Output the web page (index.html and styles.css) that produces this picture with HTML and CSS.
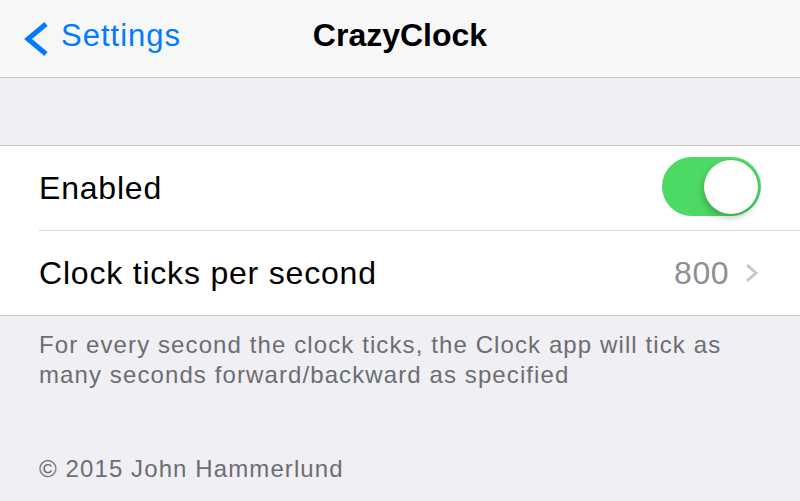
FILE: index.html
```html
<!DOCTYPE html>
<html>
<head>
<meta charset="utf-8">
<link rel="stylesheet" href="styles.css">
</head>
<body>
<header class="navbar">
  <a class="back">
    <svg class="back-chevron" width="30" height="40" viewBox="0 0 30 40"><path d="M26 5 L8 20 L26 35" fill="none" stroke="#007aff" stroke-width="5" stroke-linecap="butt" stroke-linejoin="miter"/></svg>
    <span>Settings</span>
  </a>
  <h1 class="title">CrazyClock</h1>
  <span class="spacer"></span>
</header>
<main class="content">
  <section class="group">
    <div class="row">
      <span class="label">Enabled</span>
      <span class="switch"><span class="knob"></span></span>
    </div>
    <div class="row">
      <span class="label">Clock ticks per second</span>
      <span class="detail">800<svg class="disclosure" width="16" height="20" viewBox="0 0 16 20"><path d="M3 2 L12 10 L3 18" fill="none" stroke="#c7c7cc" stroke-width="3"/></svg></span>
    </div>
  </section>
  <p class="footer">For every second the clock ticks, the Clock app will tick as many seconds forward/backward as specified</p>
  <p class="copyright">© 2015 John Hammerlund</p>
</main>
</body>
</html>
```
FILE: styles.css
```css
* { box-sizing: border-box; }
html, body { margin: 0; padding: 0; }
body {
  width: 800px;
  height: 501px;
  overflow: hidden;
  background: #efeff4;
  font-family: "Liberation Sans", Arial, sans-serif;
}
.navbar {
  height: 78px;
  background: #f7f7f8;
  border-bottom: 1px solid #c8c7cc;
  display: grid;
  grid-template-columns: 1fr auto 1fr;
  align-items: center;
  padding-bottom: 6px;
}
.back {
  display: flex;
  align-items: center;
  gap: 11px;
  padding-left: 20px;
  color: #007aff;
  font-size: 31px;
  letter-spacing: 1px;
}
.back-chevron { margin-top: 6px; flex: none; }
.title {
  margin: 0;
  font-size: 32px;
  font-weight: bold;
  color: #000;
}
.content { padding-top: 67px; }
.group {
  background: #fff;
  border-top: 1px solid #c8c7cc;
  border-bottom: 1px solid #c8c7cc;
  padding-left: 39px;
}
.row {
  height: 84px;
  display: flex;
  align-items: center;
  justify-content: space-between;
  padding-right: 38px;
  font-size: 32px;
  letter-spacing: 0.8px;
  color: #000;
}
.row + .row { border-top: 1px solid #d9d9dc; height: 85px; }
.switch {
  width: 99px;
  height: 59px;
  border-radius: 30px;
  background: #4cd964;
  position: relative;
  display: block;
  margin-top: -3px;
  margin-right: 1px;
}
.knob {
  position: absolute;
  right: 3px;
  top: 3px;
  width: 54px;
  height: 54px;
  border-radius: 50%;
  background: #fff;
  box-shadow: -1px 4px 7px rgba(0,0,0,0.22), 0 0 1px rgba(0,0,0,0.15);
}
.detail {
  color: #8e8e93;
  display: flex;
  align-items: center;
  gap: 15px;
  margin-right: 2px;
  letter-spacing: 0.5px;
}
.disclosure { flex: none; }
.footer {
  margin: 14px 0 0;
  padding: 0 40px 0 39px;
  font-size: 24px;
  line-height: 30px;
  letter-spacing: 1.1px;
  color: #6d6d72;
}
.copyright {
  margin: 65px 0 0;
  padding-left: 39px;
  font-size: 24px;
  letter-spacing: 1.1px;
  color: #6d6d72;
}
```
